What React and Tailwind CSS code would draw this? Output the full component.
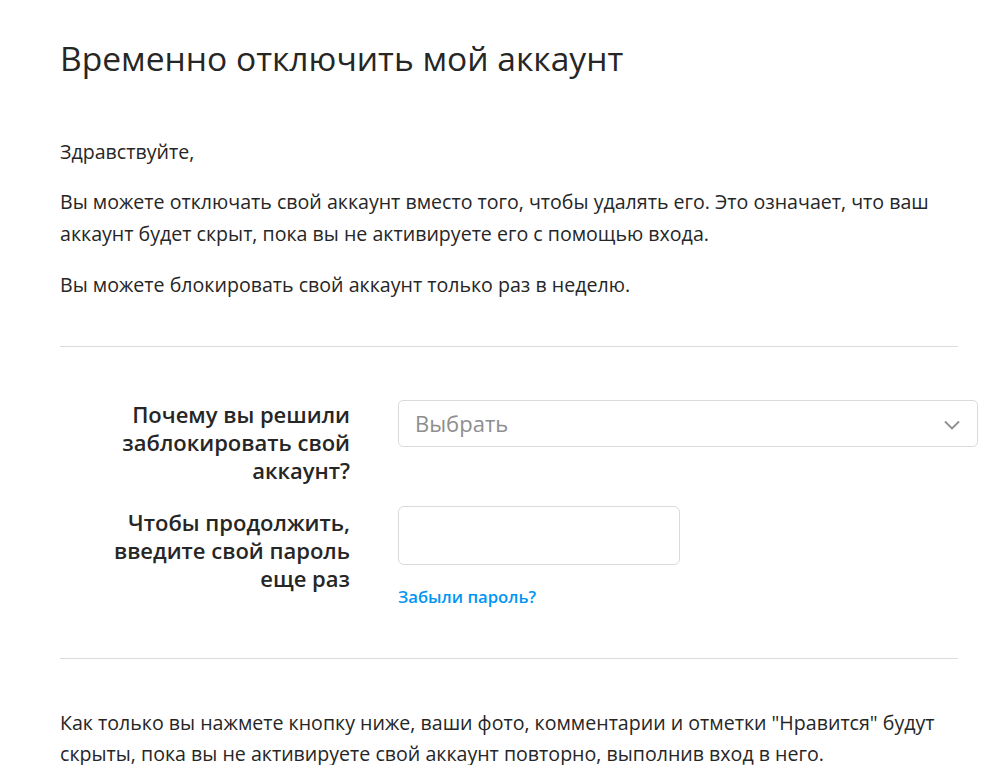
import React, { useState } from "react";

const reasons = [
  "Нужен перерыв",
  "Слишком занят / слишком отвлекает",
  "Проблемы конфиденциальности",
  "Другое",
];

const App = () => {
  const [reason, setReason] = useState("");
  const [password, setPassword] = useState("");

  return (
    <div className="min-h-screen bg-white text-[#262626] font-['Open_Sans',sans-serif] overflow-hidden">
      <div className="pl-[60px] pt-[38px]">
        <h1 className="text-[33.6px] leading-[40px] font-normal">
          Временно отключить мой аккаунт
        </h1>

        <div className="mt-[58px] w-[897px] text-[19.6px] leading-[32px]">
          <p>Здравствуйте,</p>
          <p className="mt-[18px]">
            Вы можете отключать свой аккаунт вместо того, чтобы удалять его. Это
            означает, что ваш аккаунт будет скрыт, пока вы не активируете его с
            помощью входа.
          </p>
          <p className="mt-[19px]">
            Вы можете блокировать свой аккаунт только раз в неделю.
          </p>
        </div>

        <hr className="mt-[45px] w-[898px] border-0 border-t border-[#dbdbdb]" />

        <div className="mt-[53px] flex flex-col gap-[22px]">
          <div className="flex items-start gap-[48px]">
            <label className="w-[290px] shrink-0 text-right text-[22px] leading-[28px] font-semibold">
              Почему вы решили заблокировать свой аккаунт?
            </label>
            <div className="relative w-[580px] shrink-0">
              <select
                value={reason}
                onChange={(e) => setReason(e.target.value)}
                className="appearance-none w-full h-[47px] rounded-[5px] border border-[#dbdbdb] bg-white pl-[16px] pr-10 text-[22px] text-[#8e8e8e] outline-none"
              >
                <option value="">Выбрать</option>
                {reasons.map((r) => (
                  <option key={r} value={r}>
                    {r}
                  </option>
                ))}
              </select>
              <svg
                className="absolute right-[18px] top-[20px] w-[16px] h-[10px] pointer-events-none"
                viewBox="0 0 16 10"
                fill="none"
                stroke="#8e8e8e"
                strokeWidth="1.8"
              >
                <path d="M1 1.5l7 7 7-7" />
              </svg>
            </div>
          </div>

          <div className="flex items-start gap-[48px]">
            <label className="w-[290px] shrink-0 pt-[2px] text-right text-[22px] leading-[28px] font-semibold">
              Чтобы продолжить, введите свой пароль
              <br />
              еще раз
            </label>
            <div className="flex flex-col shrink-0">
              <input
                type="password"
                value={password}
                onChange={(e) => setPassword(e.target.value)}
                className="w-[282px] h-[59px] rounded-[6px] border border-[#dbdbdb] bg-white px-3 text-[16px] outline-none"
              />
              <a
                href="#"
                className="mt-[22px] text-[16.7px] leading-[20px] font-semibold text-[#0095f6]"
              >
                Забыли пароль?
              </a>
            </div>
          </div>
        </div>

        <hr className="mt-[51px] w-[898px] border-0 border-t border-[#dbdbdb]" />

        <p className="mt-[48px] w-[897px] text-[19.6px] leading-[31px]">
          Как только вы нажмете кнопку ниже, ваши фото, комментарии и отметки
          "Нравится" будут скрыты, пока вы не активируете свой аккаунт повторно,
          выполнив вход в него.
        </p>
      </div>
    </div>
  );
};

export default App;
